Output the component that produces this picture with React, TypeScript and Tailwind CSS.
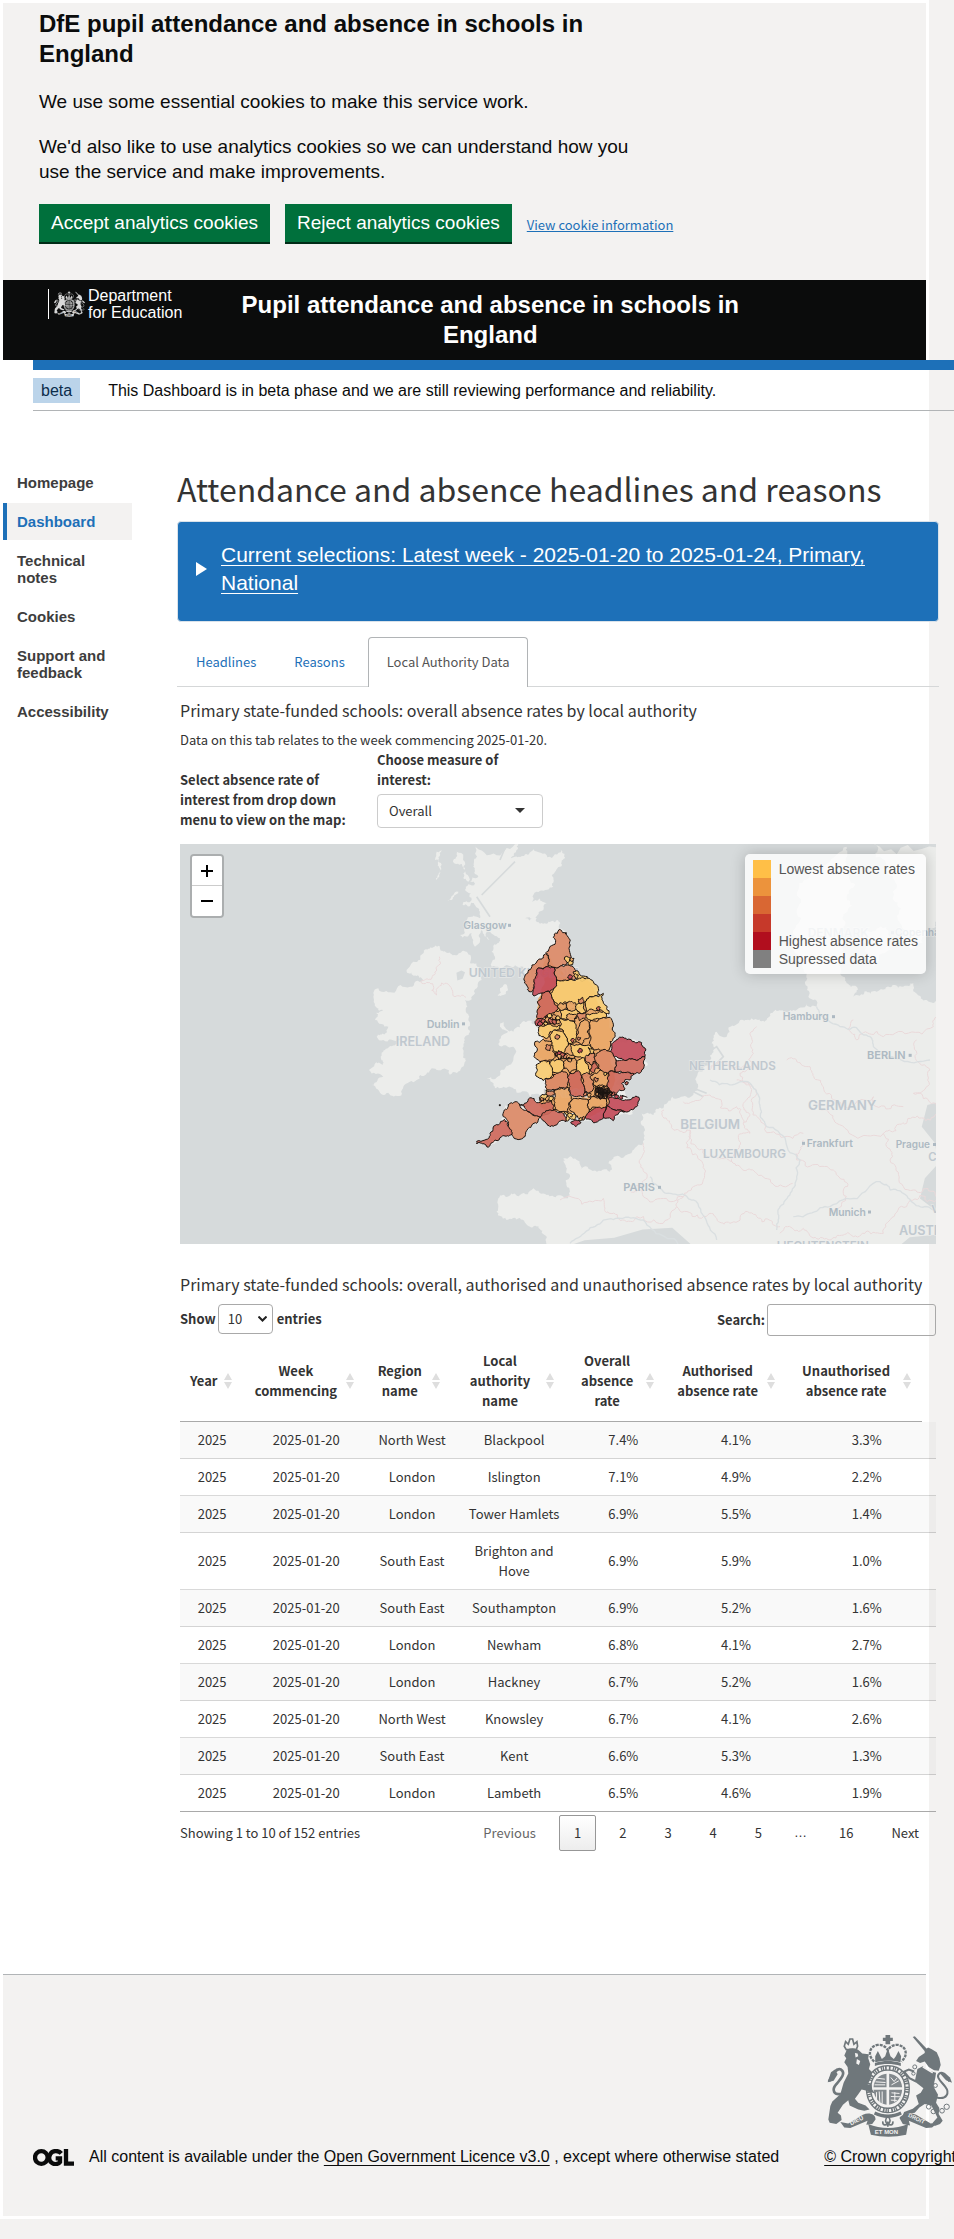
import React from "react";

type Pt = [number, number];

const SANS = "font-['Liberation_Sans',Arial,sans-serif]";
const SOURCE = "font-['Noto_Sans_CJK_SC','Noto_Sans',sans-serif]";

/* ---------- map geometry ---------- */

function parse(s: string, dx = 0, dy = 0): Pt[] {
  return s
    .trim()
    .split(/\s+/)
    .map((p) => {
      const [x, y] = p.split(",").map(Number);
      return [x + dx, y + dy] as Pt;
    });
}

// Displaces the middle of an edge; the same edge always bends the same way,
// so neighbouring areas keep a common border.
function bend(a: Pt, b: Pt, amp: number, depth: number, out: Pt[]) {
  const len = Math.hypot(b[0] - a[0], b[1] - a[1]);
  if (depth === 0 || len < 7) {
    out.push(b);
    return;
  }
  const flip = a[0] > b[0] || (a[0] === b[0] && a[1] > b[1]);
  const [p, q] = flip ? [b, a] : [a, b];
  const h = Math.sin(p[0] * 12.9898 + p[1] * 78.233 + q[0] * 37.719 + q[1] * 9.131) * 43758.5453;
  const k = (h - Math.floor(h) - 0.5) * amp;
  const m: Pt = [(p[0] + q[0]) / 2 - (q[1] - p[1]) * k, (p[1] + q[1]) / 2 + (q[0] - p[0]) * k];
  bend(a, m, amp, depth - 1, out);
  bend(m, b, amp, depth - 1, out);
}

function rough(pts: Pt[], amp = 0.45, closed = true): string {
  const out: Pt[] = [pts[0]];
  const n = closed ? pts.length : pts.length - 1;
  for (let i = 0; i < n; i++) bend(pts[i], pts[(i + 1) % pts.length], amp, 4, out);
  return "M" + out.map(([x, y]) => `${x.toFixed(1)} ${y.toFixed(1)}`).join("L") + (closed ? "Z" : "");
}

const LAND: Pt[][] = [
  parse(
    "915,12 912,60 925,110 895,125 860,35 850,60 880,100 915,130 885,150 905,180 878,195 925,205 930,235 905,230 890,262 870,285 905,280 915,320 930,300 935,270 960,300 950,275 990,295 965,335 965,380 1010,375 1060,380 1062,410 1085,460 1115,470 1100,530 1095,555 1050,562 1030,575 1000,545 990,560 1015,575 985,612 1030,620 1030,660 990,695 950,715 975,745 1040,758 1080,770 1130,765 1105,785 1050,790 1020,795 1000,830 920,905 950,922 1020,885 1050,897 1075,855 1110,838 1140,860 1180,845 1260,840 1340,830 1400,795 1370,770 1340,735 1400,700 1428,640 1400,605 1340,600 1320,580 1310,530 1290,465 1250,420 1210,400 1198,300 1168,265 1160,240 1100,235 1055,235 1120,210 1130,190 1085,185 1150,140 1170,80 1185,55 1175,30 1090,28 1035,50 1015,60 1045,12",
  ),
  parse(
    "810,320 830,338 890,335 900,370 935,420 915,460 885,480 890,520 897,580 880,640 875,682 800,690 740,720 700,740 640,765 605,735 640,710 597,690 638,675 632,650 680,612 690,598 640,600 620,590 655,560 615,540 640,510 612,480 625,445 720,440 760,420 710,395 730,365 760,340",
  ),
  parse("800,35 820,30 805,60 812,90 798,120 795,60"),
  parse("850,165 865,155 845,180 832,182"),
  parse("1005,432 1012,440 1000,465 983,468 990,445"),
  parse("1180,955 1200,960 1205,1000 1190,990"),
  parse(
    "985,1075 1050,1065 1090,1045 1130,1065 1200,1065 1200,1010 1180,955 1220,960 1230,992 1320,995 1315,970 1370,945 1420,910 1415,820 1480,805 1550,770 1580,730 1600,690 1620,660 1625,610 1640,575 1670,590 1680,560 1730,540 1790,540 1810,515 1870,510 1910,490 1940,500 1915,470 1905,430 1910,400 1870,330 1885,200 1920,100 2030,20 2040,90 2030,170 2050,200 2020,260 2020,330 2010,400 2030,430 2060,440 2050,470 2120,455 2170,435 2230,430 2270,480 2320,490 2400,490 2400,1230 1160,1230 1130,1190 1080,1160 1010,1140 985,1100",
  ),
  parse("2110,12 2145,80 2170,170 2190,250 2230,325 2270,280 2310,230 2400,200 2400,12"),
  parse("2090,270 2150,260 2160,330 2110,385 2085,330"),
];

const BORDERS: Pt[][] = [
  parse("808,350 800,390 752,425 800,465 830,430 855,470 888,472"),
  parse("1482,810 1500,850 1560,870 1600,930 1690,970 1760,1000 1868,1030"),
  parse("1540,785 1620,765 1700,800 1720,850 1740,880 1700,930 1690,970"),
  parse("1760,560 1750,640 1710,700 1720,790 1720,850"),
  parse("1420,910 1430,1000 1380,1050 1420,1070 1540,1070"),
  parse("1170,1080 1300,1075 1320,1120 1400,1130 1520,1100 1540,1070"),
  parse("1560,870 1590,960 1570,1040 1540,1070"),
  parse("1520,1100 1620,1120 1680,1150 1760,1130 1830,1160"),
  parse("1850,660 1920,680 1960,740 2050,800 2110,770 2200,800"),
  parse("2050,540 2060,600 2140,590 2290,560 2310,500"),
  parse("2300,820 2210,850 2140,880 2160,960 2230,1050 2300,1080"),
  parse("1830,1180 1900,1165 1980,1200 2050,1190 2140,1180 2210,1100 2300,1080"),
  parse("1930,780 2000,850 2140,880"),
  parse("1900,900 1880,960 1990,990 2020,1060 1980,1120"),
  parse("1700,720 1760,760 1780,850 1900,880"),
  parse("2240,600 2280,690 2230,760 2300,820"),
  parse("1620,690 1700,680 1750,690"),
];

const RIVERS: Pt[][] = [
  parse("1620,720 1740,730 1770,800 1790,860 1890,960 1880,1010 1830,1100 1820,1170"),
  parse("1200,1210 1300,1140 1420,1140 1540,1222"),
  parse("1440,1010 1500,1060 1570,1080 1640,1200"),
  parse("1870,1130 1980,1100 2130,1025 2200,1060 2290,1110"),
  parse("1940,500 2010,560 2100,590 2130,640 2280,660"),
];

const C = { y: "#f8cb72", o: "#e9a96b", d: "#dc8a67", r: "#cf695d", c: "#c44c5a" };

const AREAS: [string, string][] = [
  [C.d, "298,58 308,68 318,72 325,82 328,100 327,115 333,140 325,150 318,165 300,170 280,172 265,168 265,135 258,128 268,115 285,103 287,92 280,82 283,72 292,70"],
  [C.d, "258,130 265,140 262,170 235,174 228,190 222,215 222,240 214,246 200,225 192,210 196,195 206,180 216,165 236,148"],
  [C.c, "235,174 262,170 280,172 283,192 290,210 282,235 270,245 250,250 222,258 218,250 222,235 222,215 230,195"],
  [C.d, "280,172 300,168 322,165 340,172 350,185 348,205 330,208 310,210 290,210 283,192"],
  [C.y, "340,185 350,182 360,195 382,200 385,206 348,208"],
  [C.y, "290,210 330,208 350,208 385,205 400,215 415,235 420,255 400,262 380,268 372,280 350,290 330,280 310,278 295,285 280,270 270,250 282,235"],
  [C.y, "380,268 400,260 430,250 426,270 440,295 447,312 430,305 415,300 400,300 380,305 376,285"],
  [C.r, "245,250 270,250 280,270 295,290 285,305 275,315 262,315 250,325 230,322 232,300 240,290 232,275 245,265"],
  [C.y, "295,290 310,300 330,300 350,295 360,310 350,325 325,325 300,325 290,312"],
  [C.o, "300,278 320,282 322,298 300,300 292,292"],
  [C.o, "322,278 348,280 350,296 330,302 318,292"],
  [C.y, "350,285 372,280 378,305 362,312 350,300"],
  [C.d, "355,268 368,262 372,276 360,282"],
  [C.d, "352,310 378,306 376,325 358,332"],
  [C.o, "320,315 350,316 345,335 325,330"],
  [C.o, "275,310 300,300 303,325 290,340 270,335"],
  [C.d, "255,320 275,315 280,335 262,342"],
  [C.c, "225,335 245,325 250,342 232,348"],
  [C.y, "235,352 260,343 300,345 300,357 285,360 270,365 265,382 245,380"],
  [C.y, "300,325 325,328 345,340 352,360 348,395 330,400 325,405 318,380 310,362 300,357"],
  [C.y, "285,360 310,362 318,380 325,405 310,430 285,425 275,400 275,370"],
  [C.o, "360,340 380,330 388,350 386,385 365,405 348,395 350,375"],
  [C.y, "378,315 400,310 430,305 440,320 425,325 400,328 385,328"],
  [C.o, "392,330 425,325 450,322 462,365 450,395 450,412 430,422 400,418 388,400 390,350"],
  [C.o, "225,395 250,388 275,395 278,425 285,435 270,450 240,455 222,440 232,420"],
  [C.d, "258,405 275,405 270,422 260,420"],
  [C.y, "330,400 360,402 385,405 395,430 380,445 350,440 335,425"],
  [C.y, "385,412 400,418 398,432 388,432"],
  [C.d, "380,435 405,430 410,452 395,465 378,455"],
  [C.o, "285,435 310,430 345,440 345,450 310,455"],
  [C.c, "455,405 475,385 510,388 545,398 558,420 555,440 520,448 490,450 470,440 450,425"],
  [C.r, "468,450 490,450 520,448 555,440 553,465 545,480 522,492 495,488 465,485"],
  [C.d, "410,430 440,422 460,435 468,450 465,485 445,488 415,475 408,455"],
  [C.r, "395,465 408,458 415,475 400,488 390,478"],
  [C.y, "350,455 375,445 390,480 380,500 355,488"],
  [C.o, "310,455 345,445 350,455 350,480 330,490 312,475"],
  [C.y, "275,450 310,455 312,475 295,490 278,485"],
  [C.y, "228,465 250,452 270,455 278,485 270,505 250,512 228,498"],
  [C.d, "258,505 290,490 322,490 325,515 315,535 285,540 262,540 256,520"],
  [C.r, "330,490 355,482 365,500 368,520 375,545 372,560 350,560 330,545 325,515"],
  [C.d, "365,495 395,490 398,520 395,545 375,545 368,520"],
  [C.o, "390,500 420,480 445,490 448,520 425,535 400,525"],
  [C.r, "445,488 490,488 522,492 510,510 485,520 495,535 470,555 448,540 442,520"],
  [C.o, "405,530 440,530 458,550 440,568 405,565"],
  [C.c, "445,562 470,565 500,570 537,562 530,590 495,605 465,600 440,588"],
  [C.c, "440,588 465,600 495,605 460,632 435,625 437,600"],
  [C.c, "383,605 410,590 437,592 437,600 430,625 380,628 375,620"],
  [C.o, "385,570 405,560 440,568 440,588 410,592 388,600"],
  [C.o, "330,575 360,565 385,570 388,600 375,620 370,628 345,615 328,598"],
  [C.o, "285,540 325,532 335,560 330,575 325,605 300,605 283,600 282,570"],
  [C.d, "258,540 285,540 282,555 265,560"],
  [C.y, "238,562 258,552 280,560 275,572 240,574"],
  [C.r, "178,585 235,578 275,572 282,600 265,612 240,622 215,612 200,602"],
  [C.r, "240,622 283,600 312,612 318,635 290,645 270,650 258,640"],
  [C.y, "312,608 345,612 345,630 318,632"],
  [C.d, "150,580 178,582 200,602 240,622 230,640 205,655 195,680 180,688 160,680 150,665 145,650 130,620 133,600"],
  [C.r, "133,628 145,650 152,675 125,680 105,690 85,712 78,705 65,700 50,702 50,694 75,690 90,670 115,645"],
  [C.c, "332,637 348,630 363,638 348,650"],
];

// Small urban authorities, drawn as [x, y, size, colour]
const TOWNS: [number, number, number, string][] = [
  [322, 148, 9, C.y], [332, 158, 8, C.y], [336, 148, 6, C.o], [330, 202, 8, C.c], [348, 198, 7, C.y],
  [240, 340, 8, C.c], [250, 332, 7, C.r], [262, 328, 8, C.o], [272, 332, 8, C.r], [282, 322, 8, C.o],
  [292, 325, 7, C.y], [268, 318, 7, C.y], [284, 335, 8, C.r], [294, 336, 6, C.o], [256, 340, 7, C.y],
  [415, 297, 6, C.r], [292, 380, 7, C.d], [338, 392, 6, C.r], [357, 386, 5, C.d], [360, 422, 7, C.c],
  [290, 432, 6, C.r], [298, 428, 7, C.c], [306, 436, 8, C.r], [298, 440, 7, C.o], [316, 440, 6, C.d],
  [330, 448, 7, C.o], [408, 508, 7, C.d], [436, 492, 5, C.y], [376, 552, 6, C.d], [388, 556, 6, C.o],
  [412, 540, 6, "#3b2a22"], [420, 536, 6, "#2b211d"], [428, 540, 7, "#2b211d"], [436, 544, 7, "#2b211d"],
  [444, 548, 6, "#3b2a22"], [418, 548, 7, "#2b211d"], [427, 550, 8, "#1d1714"], [436, 554, 7, "#3b2a22"],
  [424, 560, 6, "#3b2a22"], [412, 552, 5, C.o], [448, 558, 6, C.r], [460, 552, 6, C.r], [470, 560, 6, C.c],
  [484, 562, 6, C.c], [500, 520, 5, C.r], [330, 616, 7, C.y], [370, 626, 5, C.d], [362, 628, 5, C.y],
  [246, 568, 7, C.d], [262, 566, 6, C.o],
];

const DARK_LINES = "M405 542l8-12 9 6 8-8 6 9 9-2 4 10 10 4-8 8-9 2-5 8-9-3-8 4-6-9-8-2zM413 530l4 34M430 528l-3 36M408 548h48M445 535l-6 30";

interface Label { x: number; y: number; t: string; size: number; dot?: number }

// Names of the base map that the coloured areas are laid over
const UNDER_LABELS: Label[] = [
  { x: 896, y: 411, t: "UNITED KINGDOM", size: 37 },
  { x: 1120, y: 770, t: "LONDON", size: 31 },
];

const LABELS: Label[] = [
  { x: 880, y: 267, t: "Glasgow", size: 31, dot: 1014 },
  { x: 770, y: 563, t: "Dublin", size: 32, dot: 876 },
  { x: 677, y: 619, t: "IRELAND", size: 38 },
  { x: 1557, y: 690, t: "NETHERLANDS", size: 35 },
  { x: 1531, y: 868, t: "BELGIUM", size: 40 },
  { x: 1599, y: 954, t: "LUXEMBOURG", size: 35 },
  { x: 1838, y: 541, t: "Hamburg", size: 31, dot: 1986 },
  { x: 2091, y: 658, t: "BERLIN", size: 33, dot: 2216 },
  { x: 1914, y: 811, t: "GERMANY", size: 40 },
  { x: 1910, y: 921, t: "Frankfurt", size: 31, dot: 1896 },
  { x: 2177, y: 924, t: "Prague", size: 30, dot: 2289 },
  { x: 1360, y: 1054, t: "PARIS", size: 33, dot: 1464 },
  { x: 1976, y: 1127, t: "Munich", size: 31, dot: 2094 },
  { x: 2187, y: 1186, t: "AUSTRIA", size: 38 },
  { x: 1820, y: 1230, t: "LIECHTENSTEIN", size: 35 },
  { x: 1913, y: 290, t: "DENMARK", size: 36 },
  { x: 2175, y: 289, t: "Copenhagen", size: 31, dot: 2163 },
  { x: 2275, y: 962, t: "CZECHIA", size: 34 },
  { x: 2284, y: 1120, t: "VIENNA", size: 33 },
];

function MapLabels({ items }: { items: Label[] }) {
  return (
    <g className="font-['Inter','Noto_Sans',sans-serif] font-semibold">
      {items.map((l) => (
        <g key={l.t} fill={l.dot ? "#adb9c2" : "#c0c8cf"}>
          <text x={l.x} y={l.y} fontSize={l.size} stroke="#ecedeb" strokeWidth="4" strokeOpacity="0.7" paintOrder="stroke">
            {l.t}
          </text>
          {l.dot && <rect x={l.dot} y={l.y - l.size / 2} width="9" height="9" />}
        </g>
      ))}
    </g>
  );
}

const LEGEND = ["bg-[#ffbf47]", "bg-[#ec933c]", "bg-[#d96733]", "bg-[#c6392a]", "bg-[#b10e1e]", "bg-[#808080]"];
const LEGEND_TEXT = ["Lowest absence rates", "", "", "", "Highest absence rates", "Supressed data"];

function MapPanel() {
  return (
    <div className="relative isolate mr-[3px] h-[400px] overflow-hidden bg-[#d6dadb]">
      <svg className="block h-full w-full" viewBox="0 0 756 400" preserveAspectRatio="xMinYMin slice" role="img" aria-label="Map of absence rates by local authority">
        <g transform="scale(0.333333) translate(-30 -12)">
          <g fill="#ecedeb">
            {LAND.map((p, i) => (
              <path key={i} d={rough(p, 0.6)} />
            ))}
          </g>
          <g fill="none" stroke="#d6dadb" strokeWidth="5">
            <path d="M1035 65L935 165M920 170L960 230M1010 12L990 60M1610 640L1640 620L1660 650L1640 670M1545 735L1610 760M1560 750L1600 770" />
            <path fill="#d6dadb" d="M862 400l12-6 8 4-6 16-12 4z" />
          </g>
          <g fill="none" stroke="#ead9da" strokeWidth="3">
            {BORDERS.map((p, i) => (
              <path key={i} d={rough(p, 0.6, false)} />
            ))}
          </g>
          <g fill="none" stroke="#dadfe1" strokeWidth="4">
            {RIVERS.map((p, i) => (
              <path key={i} d={rough(p, 0.3, false)} />
            ))}
          </g>
          <MapLabels items={LABELS} />
          <g transform="translate(870 210)" fill="#e9a96b">
            <path d={rough(parse("258,130 290,175 380,210 410,260 440,310 462,370 450,415 465,490 450,560 440,600 380,625 330,610 280,605 235,580 258,540 256,510 278,480 230,440 250,390 240,350 225,340 232,300 245,250 250,180"), 0.3)} />
          </g>
          <MapLabels items={UNDER_LABELS} />
          <g transform="translate(870 210)" stroke="#1a1310" strokeWidth="3" strokeLinejoin="round">
            {AREAS.map(([fill, p], i) => (
              <path key={i} fill={fill} fillOpacity="0.93" d={rough(parse(p), 0.5)} />
            ))}
            {TOWNS.map(([x, y, s, fill], i) => (
              <path key={i} fill={fill} d={rough(parse(`${x - s},${y} ${x - 2},${y - s} ${x + s},${y - 3} ${x + s - 2},${y + s - 2} ${x - 2},${y + s}`), 0.7)} />
            ))}
            <path d={DARK_LINES} fill="none" />
            <path d="M118 584h3v3h-3zM316 68h3v3h-3zM486 556l16 6M300 446h40" />
          </g>
        </g>
      </svg>

      <div className="absolute top-[10px] left-[10px] flex w-[34px] flex-col rounded-[4px] border-2 border-black/20 bg-clip-padding text-black">
        <button type="button" aria-label="Zoom in" className="flex h-[30px] items-center justify-center rounded-t-[2px] border-b border-[#ccc] bg-white">
          <svg width="12" height="12" viewBox="0 0 12 12" fill="none" stroke="currentColor" strokeWidth="2"><path d="M0 6h12M6 0v12" /></svg>
        </button>
        <button type="button" aria-label="Zoom out" className="flex h-[30px] items-center justify-center rounded-b-[2px] bg-white">
          <svg width="12" height="12" viewBox="0 0 12 12" fill="none" stroke="currentColor" strokeWidth="2"><path d="M0 6h12" /></svg>
        </button>
      </div>

      <div className={`absolute top-[10px] right-[10px] rounded-[5px] bg-white/80 px-[8px] py-[6px] text-[14px] leading-[18px] text-[#555] shadow-[0_0_15px_rgba(0,0,0,0.2)] ${SANS}`}>
        {LEGEND.map((c, i) => (
          <div key={c} className="flex h-[18px] gap-[8px]">
            <i className={`h-[18px] w-[18px] ${c}`} />
            <span>{LEGEND_TEXT[i]}</span>
          </div>
        ))}
      </div>
    </div>
  );
}

/* ---------- crests and logos ---------- */

function Crest({ className, label, cut }: { className: string; label: string; cut: string }) {
  return (
    <svg className={className} viewBox="0 0 376 308" role="img" aria-label={label} fill="currentColor">
      <g>
        <path d="M176 2h14v8h8v10h-8v10h-14V20h-8V10h8z" />
        <path fill="none" stroke="currentColor" strokeWidth="7" strokeDasharray="9 3" d="M142 82C120 62 128 36 152 32c14-2 26 6 31 16 5-10 17-18 31-16 24 4 32 30 10 50" />
        <path d="M145 66l8-16 8 16 4 8 10-8 8-24 8 24 10 8 6-8 8-16 8 16-2 18c-24-6-50-6-76 0z" />
        <path d="M144 86c26-8 52-8 78 0v9c-26-8-52-8-78 0z" />
      </g>
      <path fill="none" stroke="currentColor" strokeWidth="17" d="M183 101c38 0 58 28 58 62s-20 66-58 66-58-32-58-66 20-62 58-62z" />
      <g fill="none" stroke={cut} strokeWidth="9" strokeDasharray="3 5 7 4 2 4">
        <path d="M183 101c38 0 58 28 58 62s-20 66-58 66-58-32-58-66 20-62 58-62z" />
      </g>
      <g>
        <path d="M179 119v40h-39c2-24 18-38 39-40zM187 119c21 2 37 16 39 40h-39zM140 167h39v45c-22-3-37-20-39-45zM187 167h39c-2 25-17 42-39 45z" opacity=".85" />
        <g fill="none" stroke={cut} strokeWidth="3">
          <path d="M150 132l24 3M146 143l30 2M143 152h32M192 130l10 12 8-10M194 152l22-12M149 174v22M157 172l2 32M166 172v36M194 176l24 2M192 187l28 1M192 198l18 1M204 174v30" />
        </g>
        <path d="M145 232c24 12 52 12 76 0l4 9c-28 14-56 14-84 0z" />
      </g>
      {/* lion */}
      <g>
        <path d="M52 36l4-14 8 8 5-16h8l4 16 9-8 2 14-4 10H58z" fill="none" stroke="currentColor" strokeWidth="5" />
        <path d="M60 46c14-6 28-5 38 4l8 8 20 2-2 12 6 18-4 14 10 10-6 22-8 16 12-2 2 16 8 12-24-8-16-4-10 14-10 14 10 12 22 8 12 12-16 4-18-4-26-12-4-16-16 14-16 24 10 8 2 14-16 12-20-4-4-10 6-40 6-14 24-22 10-34 14-28-2-20-10-14 6-12-6-8z" />
        <path fill={cut} d="M84 56l8 2 2 8-8 4zM90 74l10 6-4 12-8-4z" />
        <path fill="none" stroke="currentColor" strokeWidth="8" d="M48 178c-30 8-34-12-20-28s30-34 14-44c-10-4-24 8-36 36" />
        <path d="M2 144l10-30 12-8 8 14-12 20z" />
      </g>
      {/* unicorn */}
      <g>
        <path d="M258 8l6-2 44 46-8 6z" />
        <path d="M294 48l10-8 10 4 16 10 8 18 4 20-6 18-14-2-16-10-12-16-14 4-12-6 8-12 18-12z" />
        <path d="M272 104l16-8 18 14 22 6-2 14-6 26 14 26-6 24 10 16-2 18 12 20-8 10-16 6-6-10 14-16-10-20-8-16-20-4-16 10-14 16-24 4-14 8 6-14 26-10 18-14-8-26 14-8 8-14-26-20z" />
        <path fill="none" stroke={cut} strokeWidth="4" d="M288 98l30 18" />
        <path fill="none" stroke="currentColor" strokeWidth="6" d="M268 142l-20-10-16-20 14-6 16 6M330 190c30 8 40-14 26-32s-30-30-18-40c8-6 20 2 30 24" />
        <path d="M338 116l16 0 16 14 6 16-18-8z" />
        <g fill="none" stroke="currentColor" strokeWidth="3">
          <circle cx="264" cy="98" r="6" /><circle cx="260" cy="118" r="5" /><circle cx="326" cy="154" r="6" />
          <circle cx="306" cy="218" r="7" /><circle cx="320" cy="232" r="7" /><circle cx="346" cy="230" r="7" /><circle cx="360" cy="218" r="8" />
        </g>
      </g>
      {/* motto ribbon */}
      <g>
        <path d="M40 264l24 4 44-26c18-8 38-2 38 14l-10 14-18 2 4-12-52 22-18-2z" />
        <path d="M336 264l-24 4-44-26c-18-8-44-2-50 10l10 18 22 4-4-14 52 22 18-2z" />
        <path d="M124 270c38 16 82 16 120 0l-6 32c-34 8-72 8-106 0z" />
        <path fill="none" stroke="currentColor" strokeWidth="5" d="M183 246c-10 12-8 16 0 28 8-12 10-16 0-28zM168 262c-2 14 10 12 15 6 5 6 17 8 15-6M183 262v16" />
      </g>
      <g fill={cut} className="font-['Liberation_Sans',Arial,sans-serif] font-bold" fontSize="18">
        <text transform="translate(72 274) rotate(-26)">DIEU</text>
        <text x="144" y="300">ET MON</text>
        <text transform="translate(243 247) rotate(26)" fontSize="17">DROIT</text>
      </g>
    </svg>
  );
}

function OglLogo() {
  return (
    <svg className="h-[17px] w-[41px] shrink-0" viewBox="0 0 123 51" role="img" aria-label="Open Government Licence" fill="none" stroke="#0b0c0c">
      <circle cx="25" cy="25.500" r="19" strokeWidth="13" />
      <path strokeWidth="13" d="M85 13C76 3 58 4 52 15c-6 11-3 22 5 27 9 6 20 3 24-3V28H68" />
      <path strokeWidth="13" d="M99 0v44h24" />
    </svg>
  );
}

/* ---------- data ---------- */

const NAV = ["Homepage", "Dashboard", "Technical notes", "Cookies", "Support and feedback", "Accessibility"];

const COLUMNS = [
  { label: "Year", width: "w-[8.5%]" },
  { label: "Week commencing", width: "w-[16.4%]" },
  { label: "Region name", width: "w-[11.6%]" },
  { label: "Local authority name", width: "w-[15.4%]" },
  { label: "Overall absence rate", width: "w-[13.5%]" },
  { label: "Authorised absence rate", width: "w-[16.3%]" },
  { label: "Unauthorised absence rate", width: "w-[18.3%]" },
];

const ROWS = [
  ["North West", "Blackpool", "7.4%", "4.1%", "3.3%"],
  ["London", "Islington", "7.1%", "4.9%", "2.2%"],
  ["London", "Tower Hamlets", "6.9%", "5.5%", "1.4%"],
  ["South East", "Brighton and Hove", "6.9%", "5.9%", "1.0%"],
  ["South East", "Southampton", "6.9%", "5.2%", "1.6%"],
  ["London", "Newham", "6.8%", "4.1%", "2.7%"],
  ["London", "Hackney", "6.7%", "5.2%", "1.6%"],
  ["North West", "Knowsley", "6.7%", "4.1%", "2.6%"],
  ["South East", "Kent", "6.6%", "5.3%", "1.3%"],
  ["London", "Lambeth", "6.5%", "4.6%", "1.9%"],
];

const PAGES = ["Previous", "1", "2", "3", "4", "5", "…", "16", "Next"];

function Cols() {
  return (
    <colgroup>
      {COLUMNS.map((c) => (
        <col key={c.label} className={c.width} />
      ))}
    </colgroup>
  );
}

function DataTable() {
  return (
    <div className="mr-[3px]">
      <div className="mr-[14px]">
        <table className="w-full table-fixed border-b border-[#a9a9a9]">
          <Cols />
          <thead>
            <tr>
              {COLUMNS.map((c) => (
                <th key={c.label} scope="col" className="relative py-[10px] pr-[26px] pl-[10px] text-center align-middle font-bold">
                  {c.label}
                  <svg className="absolute top-1/2 right-[11px] -mt-[8px]" width="8" height="16" viewBox="0 0 8 16" fill="#dedede" aria-hidden="true">
                    <path d="M4 0l4 7H0zM4 16l4-7H0z" />
                  </svg>
                </th>
              ))}
            </tr>
          </thead>
        </table>
      </div>
      <table className="w-full table-fixed border-b border-[#a9a9a9]">
        <Cols />
        <tbody>
          {ROWS.map((r, i) => (
            <tr key={r[1]} className={`${i > 0 ? "border-t border-black/15" : ""} ${i % 2 === 0 ? "bg-black/[0.025]" : ""}`}>
              {["2025", "2025-01-20", ...r].map((v, j) => (
                <td key={j} className="px-[10px] py-[8px] text-center">
                  {v}
                </td>
              ))}
            </tr>
          ))}
        </tbody>
      </table>
    </div>
  );
}

/* ---------- page ---------- */

export default function App() {
  return (
    <div className={`min-h-screen overflow-x-hidden bg-[#f3f2f1] pb-[20px] text-[13px] leading-[20px] text-[#333] ${SOURCE}`}>
      <div className="mr-[25px] bg-white p-[3px]">
        {/* cookie banner */}
        <section className={`bg-[#f3f2f1] px-[36px] pt-[6px] pb-[38px] text-[#0b0c0c] ${SANS}`} aria-label="Cookies">
          <div className="max-w-[600px]">
            <h2 className="text-[24px] leading-[30px] font-bold">DfE pupil attendance and absence in schools in England</h2>
            <p className="mt-[20px] text-[19px] leading-[25px]">We use some essential cookies to make this service work.</p>
            <p className="mt-[20px] text-[19px] leading-[25px]">We'd also like to use analytics cookies so we can understand how you use the service and make improvements.</p>
          </div>
          <div className="mt-[20px] flex items-center gap-[15px]">
            <button type="button" className="bg-[#00703c] px-[12px] pt-[9px] pb-[10px] text-[19px] leading-[19px] text-white shadow-[0_2px_0_#002d18]">Accept analytics cookies</button>
            <button type="button" className="bg-[#00703c] px-[12px] pt-[9px] pb-[10px] text-[19px] leading-[19px] text-white shadow-[0_2px_0_#002d18]">Reject analytics cookies</button>
            <a href="#cookies" className={`pt-[4px] text-[13px] leading-[20px] text-[#1d70b8] underline ${SOURCE}`}>View cookie information</a>
          </div>
        </section>

        {/* header */}
        <header className={`flex min-h-[80px] items-start bg-[#0b0c0c] text-white ${SANS}`}>
          <a href="#home" className="mt-[9px] ml-[45px] flex h-[30px] shrink-0 items-center border-l border-white pl-[5px]">
            <Crest className="h-[30px] w-[31px] text-[#d8d8d8]" label="Royal coat of arms" cut="#0b0c0c" />
            <span className="ml-[3px] text-[16px] leading-[17px]">Department<br />for Education</span>
          </a>
          <h1 className="mt-[10px] ml-[43px] w-[530px] text-center text-[24px] leading-[30px] font-bold">Pupil attendance and absence in schools in England</h1>
        </header>

        {/* phase banner */}
        <div className={`-mr-[28px] ml-[30px] flex items-center border-t-[10px] border-b border-t-[#1d70b8] border-b-[#b1b4b6] pt-[8px] pb-[7px] text-[16px] leading-[25px] text-[#0b0c0c] ${SANS}`}>
          <strong className="mr-[28px] bg-[#bbd4ea] px-[8px] font-normal text-[#0c2d4a]">beta</strong>
          <span>This Dashboard is in beta phase and we are still reviewing performance and reliability.</span>
        </div>

        <div className="mt-[53px] flex items-start">
          <nav className={`flex w-[129px] shrink-0 flex-col gap-[2px] text-[15px] leading-[17px] font-bold ${SANS}`} aria-label="Main">
            {NAV.map((n) => (
              <a
                key={n}
                href={`#${n.toLowerCase().replace(/ /g, "-")}`}
                className={n === "Dashboard" ? "border-l-4 border-[#1d70b8] bg-[#f3f2f1] py-[10px] pr-[18px] pl-[10px] text-[#1d70b8]" : "border-l-4 border-transparent py-[10px] pr-[18px] pl-[10px] text-[#3d3d3d]"}
              >
                {n}
              </a>
            ))}
          </nav>

          <main className="-mr-[13px] ml-[45px] min-w-0 flex-1">
            <h2 className="mt-[4px] text-[32px] leading-[40px]">Attendance and absence headlines and reasons</h2>

            <details className={`mt-[13px] rounded-[4px] border border-[#d9e2ea] bg-[#1d70b8] pr-[40px] pl-[18px] text-white ${SANS}`}>
              <summary className="flex list-none items-center gap-[14px] pt-[19px] pb-[24px] text-[21px] leading-[28px]">
                <svg className="shrink-0" width="11" height="14" viewBox="0 0 11 14" fill="currentColor" aria-hidden="true"><path d="M0 0l11 7-11 7z" /></svg>
                <span className="underline decoration-1 underline-offset-[3px]">Current selections: Latest week - 2025-01-20 to 2025-01-24, Primary, National</span>
              </summary>
            </details>

            <div className="mt-[15px] flex items-end border-b border-[#d5d7d8]" role="tablist">
              <button type="button" role="tab" className="px-[19px] pt-[13px] pb-[14px] text-[#1d70b8]">Headlines</button>
              <button type="button" role="tab" className="px-[19px] pt-[13px] pb-[14px] text-[#1d70b8]">Reasons</button>
              <button type="button" role="tab" aria-selected="true" className="-mb-px ml-[4px] rounded-t-[4px] border border-b-0 border-[#b1b4b6] bg-white px-[18px] pt-[14px] pb-[15px] text-[#555]">Local Authority Data</button>
            </div>

            <div className="pl-[3px]">
              <h3 className="mt-[11px] text-[16px] leading-[24px]">Primary state-funded schools: overall absence rates by local authority</h3>
              <p className="mt-[8px]">Data on this tab relates to the week commencing 2025-01-20.</p>
              <div className="flex items-start font-bold">
                <p className="mt-[20px] w-[197px] pr-[24px]">Select absence rate of interest from drop down menu to view on the map:</p>
                <div className="w-[166px]">
                  <label htmlFor="measure" className="block pr-[40px]">Choose measure of interest:</label>
                  <div className="relative mt-[4px]">
                    <select id="measure" defaultValue="Overall" className="h-[34px] w-full appearance-none rounded-[4px] border border-[#ccc] bg-white pl-[11px] font-normal">
                      <option>Overall</option>
                      <option>Authorised</option>
                      <option>Unauthorised</option>
                    </select>
                    <svg className="pointer-events-none absolute top-[14px] right-[18px]" width="10" height="5" viewBox="0 0 10 5" fill="#333" aria-hidden="true"><path d="M0 0h10L5 5z" /></svg>
                  </div>
                </div>
              </div>
              <div className="mt-[14px]">
                <MapPanel />
              </div>

              <h3 className="mt-[28px] text-[16px] leading-[24px] whitespace-nowrap">Primary state-funded schools: overall, authorised and unauthorised absence rates by local authority</h3>
              <div className="mt-[8px] mr-[3px] flex items-start justify-between font-bold">
                <label className="flex items-center gap-[2px]">
                  Show
                  <span className="relative">
                    <select defaultValue="10" className="h-[30px] w-[55px] appearance-none rounded-[4px] border border-[#a9a9a9] bg-white pl-[9px] font-normal">
                      <option>10</option>
                      <option>25</option>
                      <option>50</option>
                      <option>100</option>
                    </select>
                    <svg className="pointer-events-none absolute top-[12px] right-[6px]" width="9" height="6" viewBox="0 0 9 6" fill="none" stroke="#222" strokeWidth="2" aria-hidden="true"><path d="M.5.5l4 4 4-4" /></svg>
                  </span>
                  <span className="ml-[2px]">entries</span>
                </label>
                <label className="flex items-center gap-[2px]">
                  Search:
                  <input type="search" className="h-[32px] w-[169px] rounded-[3px] border border-[#a9a9a9] bg-transparent px-[5px] font-normal" />
                </label>
              </div>

              <div className="mt-[5px]">
                <DataTable />
              </div>

              <div className="mr-[3px] flex items-start justify-between">
                <p className="mt-[11px]">Showing 1 to 10 of 152 entries</p>
                <div className="mt-[3px] mr-[2px] flex gap-[8px]">
                  {PAGES.map((p) =>
                    p === "…" ? (
                      <span key={p} className={`px-[9px] py-[8px] ${SANS}`}>…</span>
                    ) : (
                      <button
                        key={p}
                        type="button"
                        className={
                          p === "1"
                            ? "rounded-[2px] border border-[#979797] bg-linear-to-b from-white to-[#ededed] px-[14px] py-[7px]"
                            : p === "Previous"
                              ? "border border-transparent px-[14px] py-[7px] text-[#666]"
                              : "border border-transparent px-[14px] py-[7px]"
                        }
                      >
                        {p}
                      </button>
                    ),
                  )}
                </div>
              </div>
            </div>
          </main>
        </div>

        {/* footer */}
        <footer className={`mt-[123px] border-t border-[#b1b4b6] bg-[#f3f2f1] pt-[59px] pb-[49px] text-[16px] leading-[20px] text-[#0b0c0c] ${SANS}`}>
          <div className="-mr-[40px] ml-[30px] flex items-end">
            <div className="flex items-center gap-[15px] whitespace-nowrap">
              <OglLogo />
              <p>
                All content is available under the{" "}
                <a href="#licence" className="underline decoration-1 underline-offset-[3px]">Open Government Licence v3.0</a> , except where otherwise stated
              </p>
            </div>
            <a href="#copyright" className="ml-[45px] flex flex-col gap-[10px] whitespace-nowrap underline decoration-1 underline-offset-[3px]">
              <Crest className="ml-[3px] h-[103px] w-[125px] text-[#6f777b]" label="Royal coat of arms" cut="#f3f2f1" />
              © Crown copyright
            </a>
          </div>
        </footer>
      </div>
    </div>
  );
}
